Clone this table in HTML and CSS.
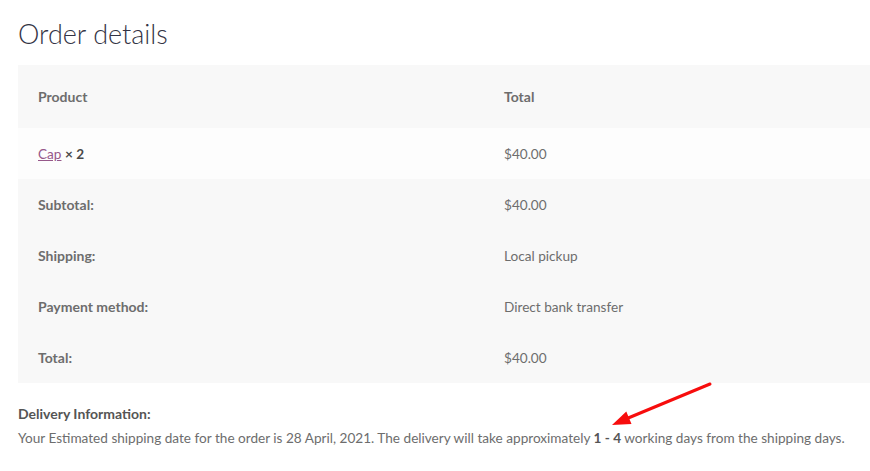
FILE: index.html
```html
<!DOCTYPE html>
<html lang="en">
<head>
<meta charset="utf-8">
<title>Order details</title>
<link rel="stylesheet" href="styles.css">
</head>
<body>
<section class="order">
  <h2 class="title">Order details</h2>
  <table class="details">
    <thead>
      <tr><th class="c1">Product</th><th class="c2">Total</th></tr>
    </thead>
    <tbody>
      <tr class="item"><td class="c1"><a href="#">Cap</a> <strong>× 2</strong></td><td class="c2">$40.00</td></tr>
    </tbody>
    <tfoot>
      <tr><th class="c1">Subtotal:</th><td class="c2">$40.00</td></tr>
      <tr><th class="c1">Shipping:</th><td class="c2">Local pickup</td></tr>
      <tr><th class="c1">Payment method:</th><td class="c2">Direct bank transfer</td></tr>
      <tr><th class="c1">Total:</th><td class="c2">$40.00</td></tr>
    </tfoot>
  </table>
  <div class="delivery">
    <p class="delivery-title">Delivery Information:</p>
    <p class="delivery-text">Your Estimated shipping date for the order is 28 April, 2021. The delivery will take approximately <strong>1 - 4</strong> working days from the shipping days.</p>
  </div>
</section>
<svg class="annotation" width="870" height="471" viewBox="0 0 870 471">
  <line x1="710" y1="384" x2="627" y2="418.5" stroke="#f70d0d" stroke-width="3" stroke-linecap="round"/>
  <polygon points="612,425 626.3,411.5 631.5,424" fill="#f70d0d"/>
</svg>
</body>
</html>
```

FILE: styles.css
```css
html, body {
  margin: 0;
  padding: 0;
  background: #ffffff;
}

body {
  font-family: "Lato", "Liberation Sans", sans-serif;
  font-size: 13.6px;
  color: #6d6d6d;
  width: 870px;
  height: 471px;
  overflow: hidden;
  position: relative;
}

.order {
  padding-left: 18px;
}

.title {
  margin: 0;
  padding-top: 17px;
  height: 65px;
  box-sizing: border-box;
  font-size: 27px;
  line-height: 34px;
  font-weight: 300;
  color: #333344;
  letter-spacing: 0;
}

.details {
  width: 852px;
  border-collapse: collapse;
  border-spacing: 0;
  table-layout: fixed;
}

.details th,
.details td {
  padding: 0 20px;
  text-align: left;
  vertical-align: middle;
  line-height: 20px;
}

.details .c1 { width: 426px; }

.details th {
  font-weight: 700;
  font-size: 14px;
  color: #6d6d6d;
}

.details thead tr {
  height: 63px;
  background: #f8f8f8;
}

.details tbody tr {
  height: 51px;
  background: #fdfdfd;
}

.details tfoot tr {
  height: 51px;
  background: #f8f8f8;
}

.details td {
  font-weight: 400;
}

.details a {
  color: #96588a;
  text-decoration: underline;
}

.details strong {
  color: #4a4a4a;
  font-weight: 700;
}

.delivery {
  padding-top: 19px;
}

.delivery p {
  margin: 0;
  line-height: 24px;
}

.delivery-title {
  font-weight: 700;
  font-size: 14px;
  color: #555555;
}

.delivery-text strong {
  font-weight: 700;
  color: #555555;
}

.annotation {
  position: absolute;
  left: 0;
  top: 0;
  pointer-events: none;
}
```
